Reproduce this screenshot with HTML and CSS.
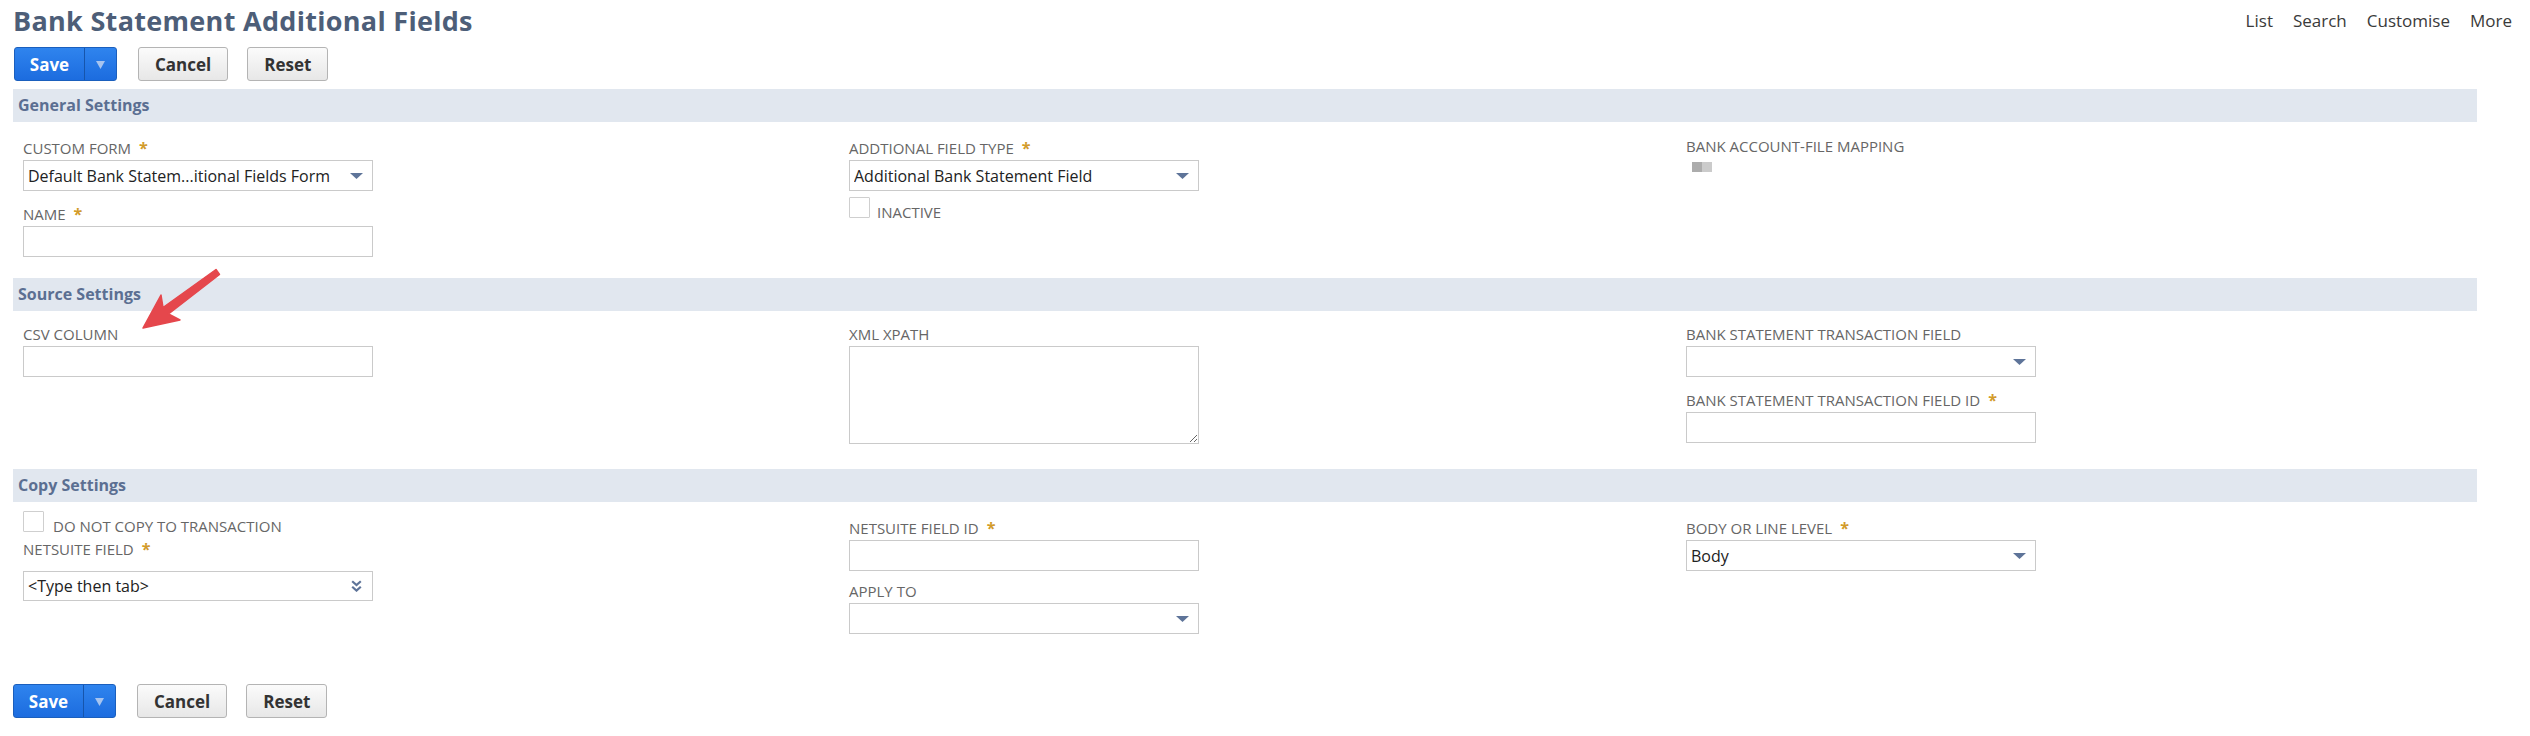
FILE: index.html
```html
<!DOCTYPE html>
<html lang="en">
<head>
<meta charset="utf-8">
<title>Bank Statement Additional Fields</title>
<link rel="stylesheet" href="styles.css">
</head>
<body>
<div class="page">
  <header class="pagehead">
    <h1 class="title">Bank Statement Additional Fields</h1>
    <nav class="toplinks"><a>List</a><a>Search</a><a>Customise</a><a>More</a></nav>
  </header>

  <div class="btnbar">
    <div class="btn-split">
      <span class="btn-main">Save</span>
      <span class="btn-drop"><svg width="9" height="8" viewBox="0 0 9 8"><polygon points="0,0 9,0 4.5,8" fill="#a7c4ef"/></svg></span>
    </div>
    <button class="btn btn--cancel">Cancel</button>
    <button class="btn btn--reset">Reset</button>
  </div>

  <section class="fgroup">
    <h2 class="fgroup-head">General Settings</h2>
    <div class="fgroup-body fgroup-body--general">
      <div class="col">
        <div class="field">
          <label class="flabel">CUSTOM FORM<span class="req">*</span></label>
          <div class="select"><span class="select-val">Default Bank Statem...itional Fields Form</span><svg class="caret" width="13" height="6" viewBox="0 0 13 6"><polygon points="0,0 13,0 6.5,6" fill="#5e7499"/></svg></div>
        </div>
        <div class="field">
          <label class="flabel">NAME<span class="req">*</span></label>
          <input class="input" type="text">
        </div>
      </div>
      <div class="col">
        <div class="field">
          <label class="flabel">ADDTIONAL FIELD TYPE<span class="req">*</span></label>
          <div class="select"><span class="select-val">Additional Bank Statement Field</span><svg class="caret" width="13" height="6" viewBox="0 0 13 6"><polygon points="0,0 13,0 6.5,6" fill="#5e7499"/></svg></div>
          <div class="check check--under"><span class="checkbox"></span><span class="check-label">INACTIVE</span></div>
        </div>
      </div>
      <div class="col">
        <div class="field">
          <label class="flabel flabel--high">BANK ACCOUNT-FILE MAPPING</label>
          <div class="toggle"><span class="toggle-a"></span><span class="toggle-b"></span></div>
        </div>
      </div>
    </div>
  </section>

  <section class="fgroup">
    <h2 class="fgroup-head">Source Settings</h2>
    <div class="fgroup-body fgroup-body--source">
      <div class="col">
        <div class="field">
          <label class="flabel">CSV COLUMN</label>
          <input class="input" type="text">
        </div>
      </div>
      <div class="col">
        <div class="field">
          <label class="flabel">XML XPATH</label>
          <textarea class="textarea"></textarea>
        </div>
      </div>
      <div class="col">
        <div class="field">
          <label class="flabel">BANK STATEMENT TRANSACTION FIELD</label>
          <div class="select"><span class="select-val"></span><svg class="caret" width="13" height="6" viewBox="0 0 13 6"><polygon points="0,0 13,0 6.5,6" fill="#5e7499"/></svg></div>
        </div>
        <div class="field">
          <label class="flabel">BANK STATEMENT TRANSACTION FIELD ID<span class="req">*</span></label>
          <input class="input" type="text">
        </div>
      </div>
    </div>
  </section>

  <section class="fgroup">
    <h2 class="fgroup-head">Copy Settings</h2>
    <div class="fgroup-body fgroup-body--copy">
      <div class="col">
        <div class="check check--top"><span class="checkbox"></span><span class="check-label">DO NOT COPY TO TRANSACTION</span></div>
        <div class="field">
          <label class="flabel flabel--wide">NETSUITE FIELD<span class="req">*</span></label>
          <div class="select select--short"><span class="select-val">&lt;Type then tab&gt;</span><svg class="dchev" width="11" height="12" viewBox="0 0 11 12"><path d="M1.2 1.2 L5.5 5 L9.8 1.2 M1.2 6.8 L5.5 10.6 L9.8 6.8" fill="none" stroke="#5e7499" stroke-width="2.2"/></svg></div>
        </div>
      </div>
      <div class="col col--offset">
        <div class="field field--tight">
          <label class="flabel">NETSUITE FIELD ID<span class="req">*</span></label>
          <input class="input" type="text">
        </div>
        <div class="field">
          <label class="flabel">APPLY TO</label>
          <div class="select"><span class="select-val"></span><svg class="caret" width="13" height="6" viewBox="0 0 13 6"><polygon points="0,0 13,0 6.5,6" fill="#5e7499"/></svg></div>
        </div>
      </div>
      <div class="col col--offset">
        <div class="field">
          <label class="flabel">BODY OR LINE LEVEL<span class="req">*</span></label>
          <div class="select"><span class="select-val">Body</span><svg class="caret" width="13" height="6" viewBox="0 0 13 6"><polygon points="0,0 13,0 6.5,6" fill="#5e7499"/></svg></div>
        </div>
      </div>
    </div>
  </section>

  <div class="btnbar btnbar--bottom">
    <div class="btn-split">
      <span class="btn-main">Save</span>
      <span class="btn-drop"><svg width="9" height="8" viewBox="0 0 9 8"><polygon points="0,0 9,0 4.5,8" fill="#a7c4ef"/></svg></span>
    </div>
    <button class="btn btn--cancel">Cancel</button>
    <button class="btn btn--reset">Reset</button>
  </div>

  <svg class="annotation" width="240" height="340" viewBox="0 0 240 340">
    <polygon points="143,328 180,320 168.5,314 219.5,274.5 216,269.5 163,307.5 161,295" fill="#e5474c" stroke="#e5474c" stroke-width="1.5" stroke-linejoin="round"/>
  </svg>
</div>
</body>
</html>
```

FILE: styles.css
```css
* { box-sizing: border-box; }

html, body {
  margin: 0;
  background: #ffffff;
}

body {
  font-family: "Open Sans", "Liberation Sans", sans-serif;
  color: #333333;
}

.page {
  position: relative;
  width: 2530px;
  padding: 0 18px 0 13px;
}

/* ---------- header ---------- */
.pagehead {
  display: flex;
  justify-content: space-between;
  align-items: flex-start;
  padding-top: 5px;
}

.title {
  margin: 0;
  font-size: 27px;
  line-height: 31px;
  letter-spacing: 0.3px;
  font-weight: 700;
  color: #4d5e78;
}

.toplinks {
  display: flex;
  gap: 20px;
  margin-top: 6px;
  font-size: 17px;
  line-height: 20px;
}

.toplinks a {
  color: #3a3a3a;
  text-decoration: none;
}

/* ---------- buttons ---------- */
.btnbar {
  display: flex;
  align-items: center;
  margin-top: 11px;
  margin-bottom: 8px;
  padding-left: 1px;
}

.btnbar--bottom {
  margin-top: 36px;
  padding-left: 0;
}

.btn-split {
  display: flex;
  height: 34px;
  border: 1px solid #1b5fbd;
  border-radius: 3px;
  background: linear-gradient(#2f84ee, #1c6cdf);
  overflow: hidden;
}

.btn-main {
  width: 70px;
  display: flex;
  align-items: center;
  justify-content: center;
  color: #ffffff;
  font-size: 17px;
  font-weight: 700;
  border-right: 1px solid #1655ac;
}

.btn-drop {
  width: 31px;
  display: flex;
  align-items: center;
  justify-content: center;
  padding-top: 1px;
}

.btn {
  height: 34px;
  padding: 0 16px;
  border: 1px solid #b4b4b4;
  border-radius: 3px;
  background: linear-gradient(#fbfbfb, #e7e7e7);
  font-family: "Open Sans", "Liberation Sans", sans-serif;
  font-size: 17px;
  font-weight: 700;
  color: #333333;
}

.btn--cancel { margin-left: 21px; }
.btn--reset { margin-left: 19px; }

/* ---------- field groups ---------- */
.fgroup {
  margin-right: 35px;
}

.fgroup-head {
  margin: 0;
  height: 33px;
  line-height: 33px;
  padding-left: 5px;
  background: #e1e7ef;
  font-size: 16px;
  font-weight: 700;
  color: #5b6f92;
}

.fgroup-body {
  display: grid;
  grid-template-columns: 826px 837px 1fr;
}

.fgroup-body--general { padding: 17px 0 7px 10px; }
.fgroup-body--source { padding: 14px 0 11px 10px; }
.fgroup-body--copy { padding: 9px 0 0 10px; }

.col--offset { padding-top: 8px; }

.field { margin-bottom: 14px; }
.field--tight { margin-bottom: 11px; }

.flabel {
  display: block;
  font-size: 15px;
  line-height: 18px;
  color: #666666;
  margin-bottom: 3px;
  white-space: nowrap;
}

.flabel--high { margin-top: -2px; }
.flabel--wide { margin-bottom: 13px; }

.req {
  margin-left: 8px;
  font-size: 16px;
  font-weight: 700;
  color: #d29b2a;
}

.select,
.input {
  display: flex;
  align-items: center;
  width: 350px;
  height: 31px;
  border: 1px solid #cacaca;
  background: #ffffff;
  padding: 0 9px 0 4px;
  font-family: "Open Sans", "Liberation Sans", sans-serif;
  font-size: 16px;
  color: #222222;
  outline: none;
}

.select--short { height: 30px; }

.select-val {
  flex: 1;
  white-space: nowrap;
  overflow: hidden;
}

.caret,
.dchev {
  flex: none;
  display: block;
}

.dchev { margin-right: 1px; }

.textarea {
  display: block;
  width: 350px;
  height: 98px;
  margin: 0;
  padding: 2px 4px;
  border: 1px solid #cacaca;
  background: #ffffff;
  font-family: "Open Sans", "Liberation Sans", sans-serif;
  font-size: 16px;
  resize: both;
  outline: none;
}

/* ---------- checkboxes ---------- */
.check {
  display: flex;
  align-items: baseline;
}

.check--under { margin-top: 6px; }
.check--top { margin-bottom: 5px; }

.checkbox {
  display: inline-block;
  width: 21px;
  height: 21px;
  border: 1px solid #cfcfcf;
  border-radius: 1px;
  background: #ffffff;
}

.check-label {
  margin-left: 7px;
  font-size: 15px;
  line-height: 18px;
  color: #666666;
}

.check--top .check-label { margin-left: 9px; }

/* ---------- toggle image ---------- */
.toggle {
  display: flex;
  margin: 7px 0 0 6px;
}

.toggle-a,
.toggle-b {
  width: 10px;
  height: 10px;
}

.toggle-a { background: #acacac; }
.toggle-b { background: #cbcbcb; }

/* ---------- annotation arrow ---------- */
.annotation {
  position: absolute;
  left: 0;
  top: 0;
  pointer-events: none;
}
```
